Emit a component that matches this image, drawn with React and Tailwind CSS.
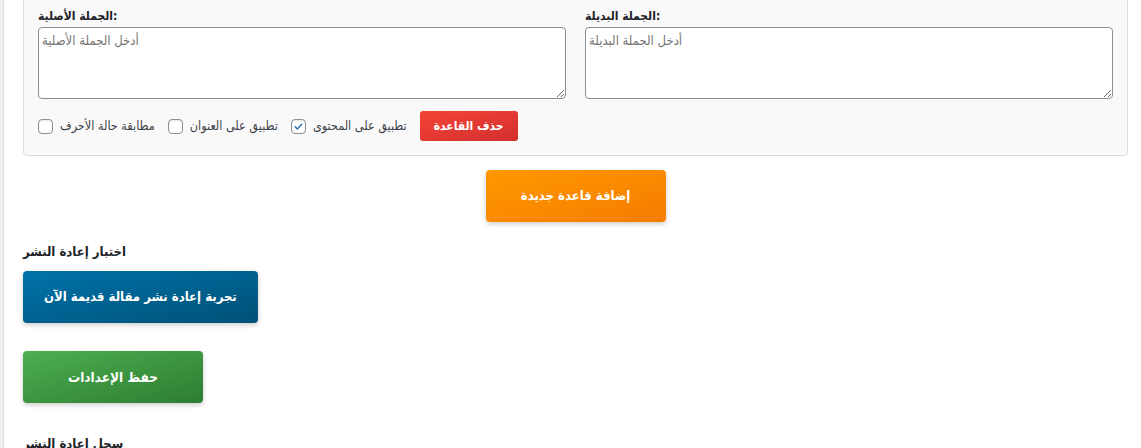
import React, { useState } from 'react';

const font = 'font-["DejaVu_Sans_Condensed","DejaVu_Sans",sans-serif]';

const Check = ({ label, checked }) => {
  const [on, setOn] = useState(checked);
  return (
    <label className="flex items-center gap-[7px] cursor-pointer">
      <span
        onClick={() => setOn(!on)}
        className="w-[15px] h-[15px] rounded-[4px] border border-[#8c8f94] bg-white flex items-center justify-center shadow-[inset_0_1px_2px_rgba(0,0,0,0.1)]"
      >
        {on && (
          <svg viewBox="0 0 20 20" className="w-[15px] h-[15px]">
            <path d="M5 10.5l3.2 3.2L15 6.5" fill="none" stroke="#2271b1" strokeWidth="2.2" strokeLinecap="round" strokeLinejoin="round" />
          </svg>
        )}
      </span>
      <span className="text-[12.5px] text-[#3c434a]">{label}</span>
    </label>
  );
};

const Field = ({ label, placeholder }) => (
  <div className="flex flex-col">
    <div className="h-[18px] mb-[2px] flex items-center text-[12px] font-bold text-[#1d2327]">
      {label}
    </div>
    <textarea
      placeholder={placeholder}
      className="h-[72px] w-full rounded-[4px] border border-[#8c8f94] bg-white px-[3px] py-[3px] text-[13px] text-[#2c3338] placeholder:text-[#757575] outline-none"
    />
  </div>
);

const App = () => {
  return (
    <div className={`flex min-h-[448px] bg-white ${font}`}>
      <div className="w-[4px] shrink-0 bg-[#f0f0f1] border-r border-[#e2e2e2]"></div>
      <main className="flex-1 pl-[19px] pr-[13px] flex flex-col">
        {/* rule card */}
        <div className="-mt-[8px] bg-[#f9f9f9] border border-[#dcdcde] rounded-[4px] px-[14px] pt-[14px] pb-[14px]">
          <div className="grid grid-cols-2 gap-[19px]">
            <Field label="الجملة الأصلية:" placeholder="أدخل الجملة الأصلية" />
            <Field label="الجملة البديلة:" placeholder="أدخل الجملة البديلة" />
          </div>
          <div className="mt-[12px] flex items-center gap-[13px]">
            <Check label="مطابقة حالة الأحرف" />
            <Check label="تطبيق على العنوان" />
            <Check label="تطبيق على المحتوى" checked />
            <button className="h-[30px] px-[14px] rounded-[3px] bg-gradient-to-br from-[#f44336] to-[#d32f2f] text-white text-[12px] font-bold">
              حذف القاعدة
            </button>
          </div>
        </div>

        <div className="flex justify-center mt-[14px]">
          <button className="h-[52px] min-w-[180px] px-[20px] rounded-[4px] bg-gradient-to-br from-[#ff9800] to-[#f57c00] text-white text-[13px] font-bold shadow-[0_2px_5px_rgba(0,0,0,0.2)]">
            إضافة قاعدة جديدة
          </button>
        </div>

        <h3 className="mt-[19px] text-[13px] font-bold text-[#1d2327] leading-[22px]">اختبار إعادة النشر</h3>
        <div className="mt-[8px]">
          <button className="h-[52px] min-w-[180px] px-[21px] rounded-[4px] bg-gradient-to-br from-[#0073aa] to-[#005177] text-white text-[13px] font-bold shadow-[0_2px_5px_rgba(0,0,0,0.2)]">
            تجربة إعادة نشر مقالة قديمة الآن
          </button>
        </div>

        <div className="mt-[28px]">
          <button className="h-[52px] min-w-[180px] px-[20px] rounded-[4px] bg-gradient-to-br from-[#4caf50] to-[#2e7d32] text-white text-[13.5px] font-bold shadow-[0_2px_5px_rgba(0,0,0,0.2)]">
            حفظ الإعدادات
          </button>
        </div>

        <h3 className="mt-[30px] text-[13px] font-bold text-[#1d2327] leading-[22px]">سجل إعادة النشر</h3>
      </main>
    </div>
  );
};

export default App;
